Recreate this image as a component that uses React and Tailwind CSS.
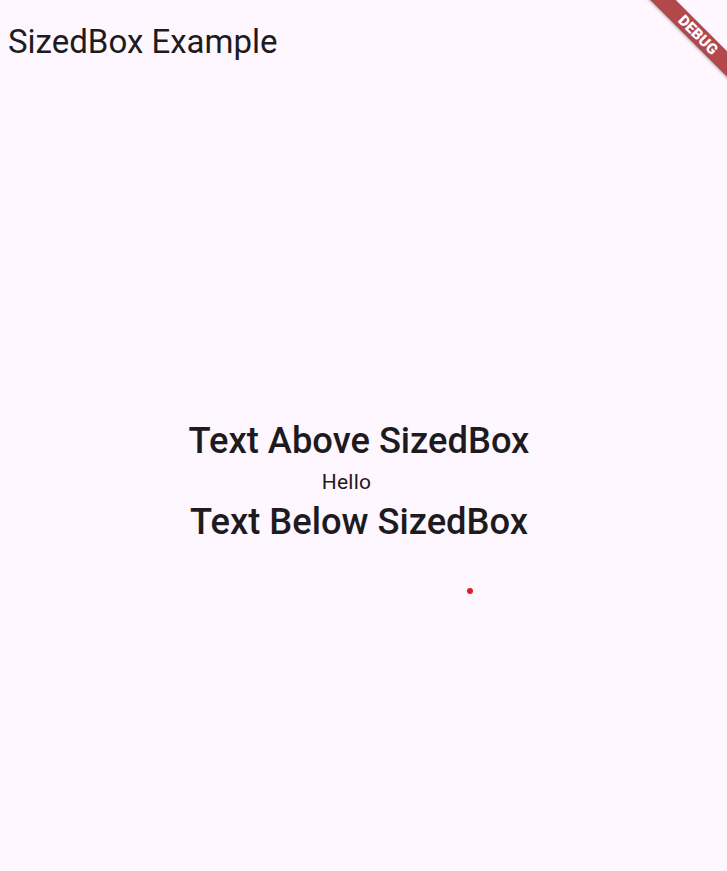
export default function App() {
  return (
    <div className="relative min-h-[871px] w-full overflow-hidden bg-[#fef7ff] text-[#1d1b20] font-['Roboto',sans-serif]">
      {/* App bar */}
      <header className="h-[64px] pl-[8px] pt-[23px]">
        <h1 className="text-[33px] leading-[38px] font-normal">SizedBox Example</h1>
      </header>

      {/* Body */}
      <main className="flex flex-col items-center pr-[9px] pt-[357px]">
        <p className="text-[36.3px] leading-[40px] font-medium">Text Above SizedBox</p>
        <p className="text-[21px] leading-[40px] tracking-[0.2px] -ml-[25px] pt-[1px]">Hello</p>
        <p className="text-[36.3px] leading-[40px] font-medium">Text Below SizedBox</p>
        <div className="mt-[46px] ml-[222px] h-[6px] w-[6px] rounded-full bg-[#e31b23]"></div>
      </main>

      {/* Debug banner */}
      <div className="pointer-events-none absolute right-0 top-0 h-[100px] w-[100px] overflow-hidden">
        <div className="absolute left-[-4px] top-[26px] flex h-[18px] w-[150px] rotate-45 items-center justify-center bg-[#b3484b] shadow-[0_1px_3px_rgba(0,0,0,0.3)]">
          <span className="text-[15px] font-black leading-none tracking-[0.2px] text-white">DEBUG</span>
        </div>
      </div>
    </div>
  );
}
